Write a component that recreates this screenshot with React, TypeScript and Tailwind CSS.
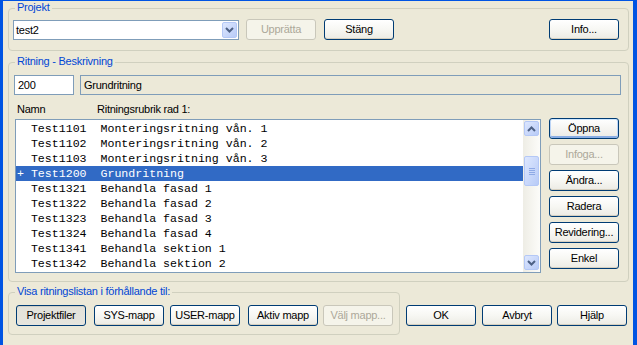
import React from 'react';

const rows: [string, string][] = [
    ['Test1101', 'Monteringsritning vån. 1'],
    ['Test1102', 'Monteringsritning vån. 2'],
    ['Test1103', 'Monteringsritning vån. 3'],
    ['Test1200', 'Grundritning'],
    ['Test1321', 'Behandla fasad 1'],
    ['Test1322', 'Behandla fasad 2'],
    ['Test1323', 'Behandla fasad 3'],
    ['Test1324', 'Behandla fasad 4'],
    ['Test1341', 'Behandla sektion 1'],
    ['Test1342', 'Behandla sektion 2'],
];

interface XpButtonProps {
    children: React.ReactNode;
    disabled?: boolean;
    pressed?: boolean;
    isDefault?: boolean;
    className?: string;
}

function XpButton({ children, disabled, pressed, isDefault, className = '' }: XpButtonProps) {
    let look = 'border-[#003c74] text-black bg-linear-to-b from-[#ffffff] via-[#f7f7f3] to-[#ecebe4] shadow-[inset_0_-1px_0_#d6d0c0]';
    if (disabled) look = 'border-[#c9c7ba] text-[#aca899] bg-[#f5f4ea]';
    else if (pressed) look = 'border-[#003c74] text-black bg-linear-to-b from-[#e3e2da] to-[#e6e5de] shadow-[inset_0_1px_0_#d1cfc4]';
    else if (isDefault) look = 'border-[#003c74] text-black bg-linear-to-b from-[#ffffff] to-[#ecebe5] shadow-[inset_0_1px_0_#cee7ff,inset_1px_0_0_#bcd4f6,inset_-1px_0_0_#bcd4f6,inset_0_-2px_0_#89ade4]';

    return (
        <button className={`h-[21px] w-[70px] shrink-0 rounded-[3px] border flex items-center justify-center leading-none ${look} ${className}`}>
            {children}
        </button>
    );
}

function Group({ title, className = '', children }: { title: string; className?: string; children: React.ReactNode }) {
    return (
        <div className={`relative border border-[#d0d0bf] rounded-[4px] ${className}`}>
            <span className="absolute -top-[8px] left-[6px] px-[2px] bg-[#ece9d8] text-[#0046d5] leading-[13px]">{title}</span>
            {children}
        </div>
    );
}

function Chevron({ up }: { up?: boolean }) {
    return (
        <svg width="9" height="6" viewBox="0 0 9 6">
            <path d={up ? 'M1 5 L4.5 1.5 L8 5' : 'M1 1 L4.5 4.5 L8 1'} fill="none" stroke="#4d6185" strokeWidth="2" />
        </svg>
    );
}

const blueBtn = 'rounded-[2px] border border-[#b4c8f6] bg-linear-to-br from-[#dde7fe] to-[#b8cbf7] flex items-center justify-center';

export default function App() {
    return (
        <div className="w-[637px] h-[345px] overflow-hidden bg-[#ece9d8] border-l-[3px] border-r-[4px] border-t border-[#0054e3] font-['Liberation_Sans',Arial,sans-serif] text-[11px] tracking-[-0.25px] text-black">
            <div className="pl-[5px] pr-[4px] pt-[7px]">
                {/* Projekt */}
                <Group title="Projekt" className="h-[43px] flex items-start pl-[4px] pt-[10px] pr-[9px]">
                    <div className="mt-[1px] w-[226px] h-[20px] border border-[#7f9db9] bg-white flex items-center">
                        <span className="flex-1 pl-[2px]">test2</span>
                        <div className={`w-[15px] h-[16px] mr-[1px] ${blueBtn}`}>
                            <Chevron />
                        </div>
                    </div>
                    <XpButton disabled className="ml-[7px]">Upprätta</XpButton>
                    <XpButton className="ml-[8px]">Stäng</XpButton>
                    <XpButton className="ml-auto">Info...</XpButton>
                </Group>

                {/* Ritning */}
                <Group title="Ritning - Beskrivning" className="mt-[11px] h-[220px] pl-[5px] pt-[12px] pr-[7px]">
                    <div className="flex gap-[6px]">
                        <div className="w-[60px] h-[20px] border border-[#7f9db9] bg-white pl-[3px] flex items-center">200</div>
                        <div className="flex-1 h-[20px] border border-[#7f9db9] bg-[#ece9d8] pl-[3px] flex items-center">Grundritning</div>
                    </div>
                    <div className="mt-[8px] flex leading-[13px]">
                        <span className="ml-[3px] w-[80px]">Namn</span>
                        <span>Ritningsrubrik rad 1:</span>
                    </div>
                    <div className="mt-[2px] flex items-start">
                        <div className="ml-[1px] mt-[1px] w-[526px] h-[154px] border border-[#7f9db9] bg-white flex">
                            <div className="flex-1 pt-[1px] font-['Liberation_Mono',monospace] text-[11.6px] tracking-normal">
                                {rows.map(([name, desc], i) => {
                                    const sel = i === 3;
                                    return (
                                        <div
                                            key={name}
                                            className={`h-[15px] leading-[15px] whitespace-pre pl-[1px] ${sel ? 'bg-[#316ac5] text-white' : 'text-black'}`}
                                        >
                                            {`${sel ? '+' : ' '} ${name}  ${desc}`}
                                        </div>
                                    );
                                })}
                            </div>
                            {/* Scrollbar */}
                            <div className="w-[17px] h-full flex flex-col bg-linear-to-r from-[#eeede5] to-[#fcfcf9] px-[1px] pt-[1px] pb-[2px]">
                                <div className={`h-[15px] ${blueBtn}`}>
                                    <Chevron up />
                                </div>
                                <div className={`mt-[20px] h-[30px] ${blueBtn} flex-col gap-[1px]`}>
                                    <div className="w-[6px] h-[1px] bg-[#8faae6]" />
                                    <div className="w-[6px] h-[1px] bg-[#8faae6]" />
                                    <div className="w-[6px] h-[1px] bg-[#8faae6]" />
                                    <div className="w-[6px] h-[1px] bg-[#8faae6]" />
                                </div>
                                <div className="flex-1" />
                                <div className={`h-[15px] ${blueBtn}`}>
                                    <Chevron />
                                </div>
                            </div>
                        </div>
                        <div className="ml-[8px] flex flex-col gap-[5px]">
                            <XpButton isDefault>Öppna</XpButton>
                            <XpButton disabled>Infoga...</XpButton>
                            <XpButton>Ändra...</XpButton>
                            <XpButton>Radera</XpButton>
                            <XpButton>Revidering...</XpButton>
                            <XpButton>Enkel</XpButton>
                        </div>
                    </div>
                </Group>

                {/* Bottom */}
                <div className="mt-[10px] flex items-start">
                    <Group title="Visa ritningslistan i förhållande til:" className="w-[392px] h-[43px] pl-[7px] pt-[12px] flex items-start">
                        <XpButton pressed className="w-[68px]">Projektfiler</XpButton>
                        <XpButton className="ml-[8px]">SYS-mapp</XpButton>
                        <XpButton className="ml-[6px]">USER-mapp</XpButton>
                        <XpButton className="ml-[8px]">Aktiv mapp</XpButton>
                        <XpButton disabled className="ml-[5px]">Välj mapp...</XpButton>
                    </Group>
                    <div className="ml-[6px] mt-[13px] flex">
                        <XpButton>OK</XpButton>
                        <XpButton className="ml-[6px]">Avbryt</XpButton>
                        <XpButton className="ml-[5px]">Hjälp</XpButton>
                    </div>
                </div>
            </div>
        </div>
    );
}
